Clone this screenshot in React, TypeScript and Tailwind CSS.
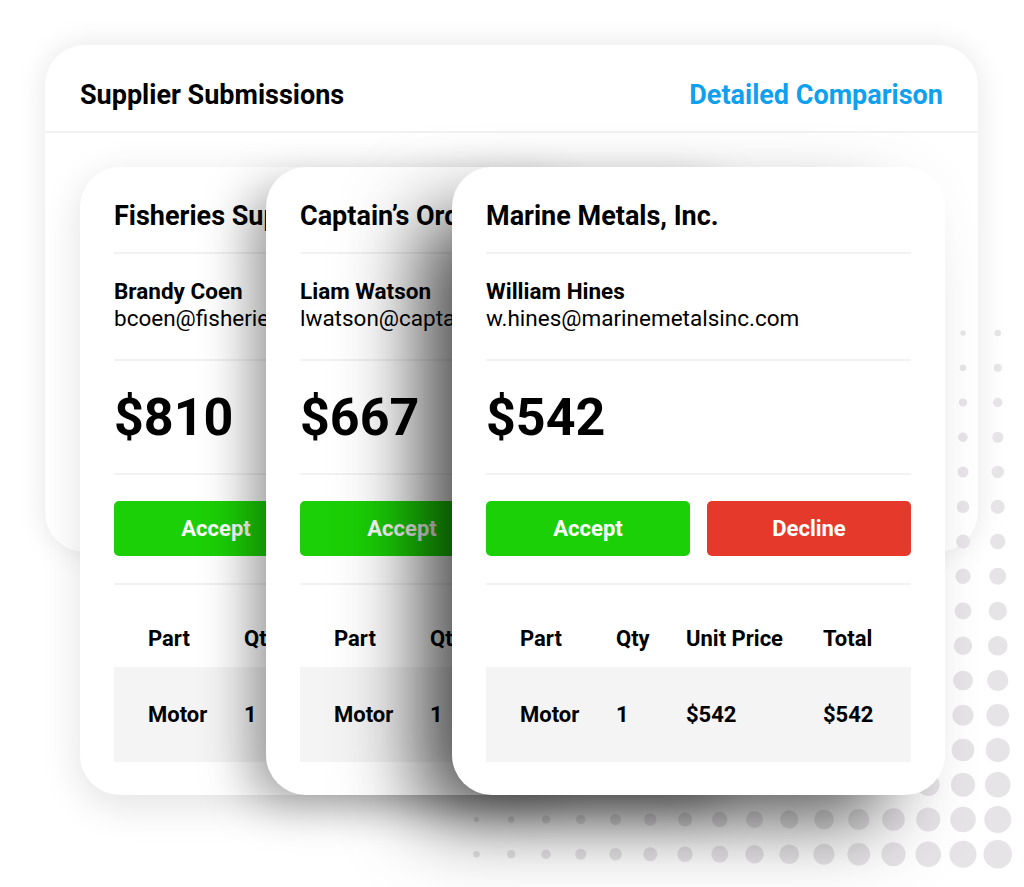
type Quote = {
  company: string;
  name: string;
  email: string;
  price: string;
  shadow: string;
};

const quotes: Quote[] = [
  {
    company: "Fisheries Supply",
    name: "Brandy Coen",
    email: "bcoen@fisheriessupply.com",
    price: "$810",
    shadow: "shadow-[0_10px_40px_rgba(0,0,0,0.12)]",
  },
  {
    company: "Captain’s Orders",
    name: "Liam Watson",
    email: "lwatson@captainsorders.com",
    price: "$667",
    shadow: "shadow-[-25px_15px_50px_-10px_rgba(0,0,0,0.4)]",
  },
  {
    company: "Marine Metals, Inc.",
    name: "William Hines",
    email: "w.hines@marinemetalsinc.com",
    price: "$542",
    shadow: "shadow-[-45px_35px_80px_-15px_rgba(0,0,0,0.72)]",
  },
];

function Dots() {
  const dots = [];
  for (let i = 0; i < 16; i++) {
    for (let j = 0; j < 16; j++) {
      const s = i + j;
      if (s < 13) continue;
      const r = Math.max(1.8, 3.3 + 0.73 * (s - 15));
      dots.push(
        <circle key={`${i}-${j}`} cx={476.5 + 34.75 * i} cy={333 + 34.75 * j} r={r} fill="#e6e4e6" />
      );
    }
  }
  return (
    <svg className="absolute left-0 top-0 z-[1]" width="1024" height="887" viewBox="0 0 1024 887">
      {dots}
    </svg>
  );
}

function Divider() {
  return <div className="h-[2px] bg-[#f2f2f2]" />;
}

function QuoteCard({ q, first }: { q: Quote; first: boolean }) {
  return (
    <div
      className={`relative w-[493px] h-[628px] shrink-0 rounded-[40px] bg-white px-[34px] pt-[32px] text-black ${q.shadow} ${
        first ? "" : "-ml-[307px]"
      }`}
    >
      <h3 className="mb-[19px] whitespace-nowrap text-[27px] font-bold leading-[34px]">{q.company}</h3>
      <Divider />
      <div className="pt-[24px] pb-[27px] whitespace-nowrap text-[22.5px] leading-[27px]">
        <p className="font-bold">{q.name}</p>
        <p>{q.email}</p>
      </div>
      <Divider />
      <p className="pt-[27px] pb-[25px] text-[52px] font-bold leading-[60px]">{q.price}</p>
      <Divider />
      <div className="grid grid-cols-2 gap-[17px] pt-[26px] pb-[27px]">
        <button className="h-[55px] rounded-[5px] bg-[#1bd006] text-[22px] font-bold text-white">Accept</button>
        <button className="h-[55px] rounded-[5px] bg-[#e53a2b] text-[22px] font-bold text-white">Decline</button>
      </div>
      <Divider />
      <div className="grid grid-cols-[96px_70px_137px_1fr] pl-[34px] pt-[40px] pb-[14px] text-[22px] font-bold leading-[28px]">
        <span>Part</span>
        <span>Qty</span>
        <span>Unit Price</span>
        <span>Total</span>
      </div>
      <div className="grid h-[95px] grid-cols-[96px_70px_137px_1fr] items-center bg-[#f4f4f4] pl-[34px] text-[22px] font-bold leading-[28px]">
        <span>Motor</span>
        <span>1</span>
        <span>{q.price}</span>
        <span>{q.price}</span>
      </div>
    </div>
  );
}

export default function App() {
  return (
    <div className="relative isolate h-[887px] w-[1024px] overflow-hidden bg-white pt-[45px] pl-[45px] font-[Roboto,sans-serif]">
      <Dots />
      <div className="h-[507px] w-[933px] rounded-[40px] bg-white shadow-[0_0_30px_rgba(0,0,0,0.1)]">
        <div className="flex items-center justify-between border-b-2 border-[#f2f2f2] px-[35px] pt-[34px] pb-[20px]">
          <h2 className="text-[27px] font-bold leading-[32px] text-black">Supplier Submissions</h2>
          <a className="text-[27px] font-bold leading-[32px] text-[#0fa0f0]">Detailed Comparison</a>
        </div>
        <div className="relative z-[2] flex pt-[34px] pl-[35px]">
          {quotes.map((q, i) => (
            <QuoteCard key={q.company} q={q} first={i === 0} />
          ))}
        </div>
      </div>
    </div>
  );
}
